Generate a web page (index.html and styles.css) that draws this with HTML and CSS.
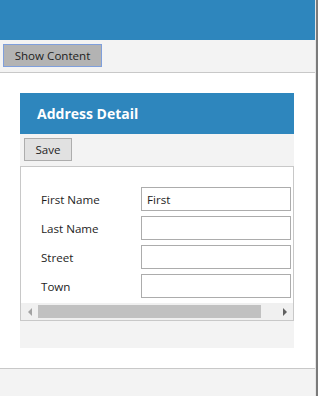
FILE: index.html
```html
<!DOCTYPE html>
<html lang="en">
<head>
    <meta charset="UTF-8">
    <title>Address Detail</title>
    <link rel="stylesheet" href="styles.css">
</head>
<body>
    <div class="window">
        <div class="app">
            <div class="topbar"></div>
            <div class="toolbar">
                <button class="btn btn-show">Show Content</button>
            </div>
            <div class="main">
                <div class="panel">
                    <div class="panel-header">Address Detail</div>
                    <div class="panel-toolbar">
                        <button class="btn btn-save">Save</button>
                    </div>
                    <div class="panel-content">
                        <div class="form">
                            <div class="row">
                                <label>First Name</label>
                                <input type="text" value="First">
                            </div>
                            <div class="row">
                                <label>Last Name</label>
                                <input type="text">
                            </div>
                            <div class="row">
                                <label>Street</label>
                                <input type="text">
                            </div>
                            <div class="row">
                                <label>Town</label>
                                <input type="text">
                            </div>
                        </div>
                        <div class="hscroll">
                            <span class="arrow arrow-left"></span>
                            <div class="track"><div class="thumb"></div></div>
                            <span class="arrow arrow-right"></span>
                        </div>
                    </div>
                </div>
            </div>
            <div class="statusbar"></div>
        </div>
        <div class="edge"></div>
    </div>
</body>
</html>
```

FILE: styles.css
```css
* {
    margin: 0;
    padding: 0;
    box-sizing: border-box;
}

body {
    font-family: 'Open Sans', 'Noto Sans', sans-serif;
    font-size: 11.6px;
    color: #1e1e1e;
    background: #fff;
}

.window {
    display: flex;
    height: 396px;
}

.app {
    width: 315px;
    display: flex;
    flex-direction: column;
}

.edge {
    width: 3px;
    border-left: 1px solid #e6e6e6;
    background: #7a7a7a;
}

.topbar {
    height: 40px;
    background: #2e86bd;
}

.toolbar {
    height: 33px;
    background: #f3f3f3;
    border-bottom: 1px solid #c8c8c8;
    padding: 4px 3px;
}

.btn {
    font-family: inherit;
    font-size: 11.6px;
    color: #1e1e1e;
    height: 23px;
    line-height: 20px;
}

.btn-show {
    width: 99px;
    background: #b3b3b3;
    border: 1px solid #7f9fdc;
}

.main {
    flex: 1;
    padding: 20px 21px 0 20px;
}

.panel {
    background: #f3f3f3;
    padding-bottom: 27px;
}

.panel-header {
    height: 41px;
    background: #2e86bd;
    color: #fff;
    font-size: 14px;
    font-weight: 700;
    padding-left: 17px;
    display: flex;
    align-items: center;
}

.panel-toolbar {
    height: 32px;
    padding: 4px;
}

.btn-save {
    width: 48px;
    background: #e1e1e1;
    border: 1px solid #adadad;
}

.panel-content {
    border: 1px solid #c8c8c8;
    background: #fff;
}

.form {
    padding: 20px 1px 5px 20px;
    display: flex;
    flex-direction: column;
    gap: 5px;
}

.row {
    display: flex;
    align-items: center;
    height: 24px;
}

.row label {
    width: 100px;
}

.row input {
    width: 150px;
    height: 24px;
    border: 1px solid #acacac;
    font-family: inherit;
    font-size: 11.6px;
    color: #1e1e1e;
    padding: 0 5px;
    outline: none;
}

.hscroll {
    height: 17px;
    background: #f0f0f0;
    display: flex;
    align-items: center;
}

.arrow {
    width: 17px;
    height: 17px;
    display: flex;
    align-items: center;
    justify-content: center;
}

.arrow::before {
    content: '';
    border-top: 4px solid transparent;
    border-bottom: 4px solid transparent;
}

.arrow-left::before {
    border-right: 4px solid #a3a3a3;
}

.arrow-right::before {
    border-left: 4px solid #606060;
}

.track {
    flex: 1;
    height: 13px;
}

.thumb {
    width: 223px;
    height: 13px;
    background: #c1c1c1;
}

.statusbar {
    height: 28px;
    background: #f3f3f3;
    border-top: 1px solid #c8c8c8;
}
```
